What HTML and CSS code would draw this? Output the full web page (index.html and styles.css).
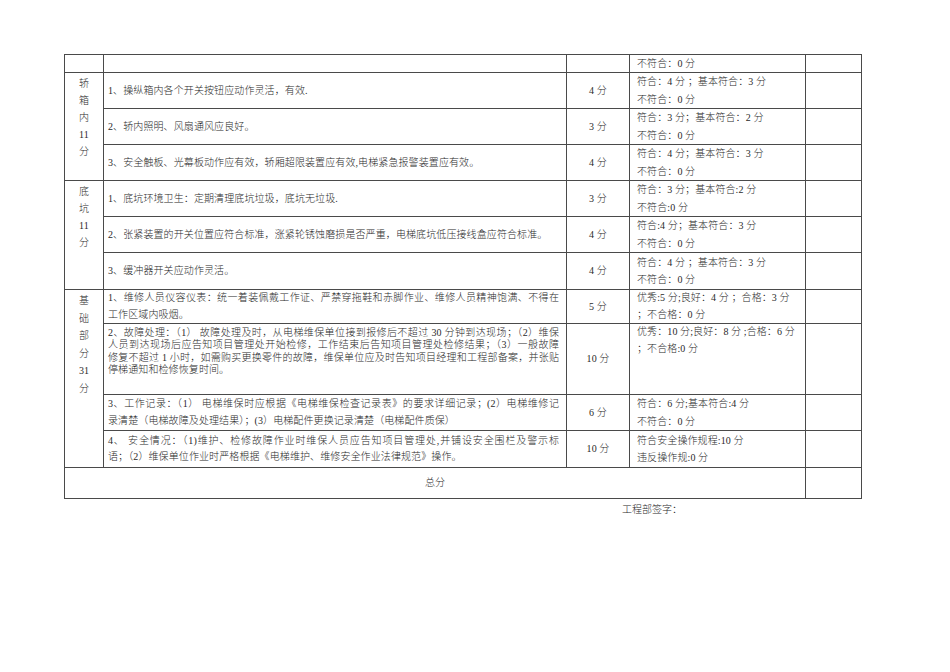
FILE: index.html
```html
<!DOCTYPE html>
<html lang="zh-CN">
<head>
<meta charset="utf-8">
<title>电梯维保检查表</title>
<link rel="stylesheet" href="styles.css">
</head>
<body>
<div class="page">
<table class="sheet">
  <colgroup>
    <col class="c1"><col class="c2"><col class="c3"><col class="c4"><col class="c5">
  </colgroup>
  <tr class="h18">
    <td></td><td></td><td></td>
    <td class="rule one">不符合：0 分</td>
    <td></td>
  </tr>
  <tr class="h36">
    <td class="cat" rowspan="3"><div>轿</div><div>箱</div><div>内</div><div>11</div><div>分</div></td>
    <td class="item">1、操纵箱内各个开关按钮应动作灵活，有效.</td>
    <td class="pts">4 分</td>
    <td class="rule">符合：4 分 ；基本符合：3 分<br>不符合：0 分</td>
    <td></td>
  </tr>
  <tr class="h36">
    <td class="item">2、轿内照明、风扇通风应良好。</td>
    <td class="pts">3 分</td>
    <td class="rule">符合：3 分；基本符合：2 分<br>不符合：0 分</td>
    <td></td>
  </tr>
  <tr class="h35">
    <td class="item">3、安全触板、光幕板动作应有效，轿厢超限装置应有效,电梯紧急报警装置应有效。</td>
    <td class="pts">4 分</td>
    <td class="rule">符合：4 分；基本符合：3 分<br>不符合：0 分</td>
    <td></td>
  </tr>
  <tr class="h36">
    <td class="cat" rowspan="3"><div>底</div><div>坑</div><div>11</div><div>分</div></td>
    <td class="item">1、底坑环境卫生：定期清理底坑垃圾，底坑无垃圾.</td>
    <td class="pts">3 分</td>
    <td class="rule">符合：3 分；基本符合:2 分<br>不符合:0 分</td>
    <td></td>
  </tr>
  <tr class="h36">
    <td class="item">2、张紧装置的开关位置应符合标准，涨紧轮锈蚀磨损是否严重，电梯底坑低压接线盒应符合标准。</td>
    <td class="pts">4 分</td>
    <td class="rule">符合:4 分；基本符合：3 分<br>不符合：0 分</td>
    <td></td>
  </tr>
  <tr class="h37">
    <td class="item">3、缓冲器开关应动作灵活。</td>
    <td class="pts">4 分</td>
    <td class="rule">符合：4 分 ；基本符合：3 分<br>不符合：0 分</td>
    <td></td>
  </tr>
  <tr class="h34">
    <td class="cat cat-tall" rowspan="4"><div>基</div><div>础</div><div>部</div><div>分</div><div>31</div><div>分</div></td>
    <td class="item multi">
      <div class="jl">1、维修人员仪容仪表：统一着装佩戴工作证、严禁穿拖鞋和赤脚作业、维修人员精神饱满、不得在</div>
      <div>工作区域内吸烟。</div>
    </td>
    <td class="pts">5 分</td>
    <td class="rule top">优秀:5 分;良好：4 分 ；合格：3 分<br>；不合格：0 分</td>
    <td></td>
  </tr>
  <tr class="h71">
    <td class="item multi tight">
      <div class="jl">2、故障处理：（1） 故障处理及时，从电梯维保单位接到报修后不超过 30 分钟到达现场；（2）维保</div>
      <div class="jl">人员到达现场后应告知项目管理处开始检修，工作结束后告知项目管理处检修结果；（3）一般故障</div>
      <div class="jl">修复不超过 1 小时，如需购买更换零件的故障，维保单位应及时告知项目经理和工程部备案，并张贴</div>
      <div>停梯通知和检修恢复时间。</div>
    </td>
    <td class="pts">10 分</td>
    <td class="rule top">优秀：10 分;良好：8 分 ;合格：6 分<br>；不合格:0 分</td>
    <td></td>
  </tr>
  <tr class="h36">
    <td class="item multi">
      <div class="jl">3、工作记录：（1） 电梯维保时应根据《电梯维保检查记录表》的要求详细记录；(2）电梯维修记</div>
      <div>录清楚（电梯故障及处理结果）；(3）电梯配件更换记录清楚（电梯配件质保）</div>
    </td>
    <td class="pts">6 分</td>
    <td class="rule">符合：6 分;基本符合:4 分<br>不符合：0 分</td>
    <td></td>
  </tr>
  <tr class="h37">
    <td class="item multi">
      <div class="jl">4、 安全情况：（1)维护、检修故障作业时维保人员应告知项目管理处,并铺设安全围栏及警示标</div>
      <div>语；（2）维保单位作业时严格根据《电梯维护、维修安全作业法律规范》操作。</div>
    </td>
    <td class="pts">10 分</td>
    <td class="rule">符合安全操作规程:10 分<br>违反操作规:0 分</td>
    <td></td>
  </tr>
  <tr class="h31">
    <td class="total" colspan="4">总分</td>
    <td></td>
  </tr>
</table>
<div class="sign">工程部签字：</div>
</div>
</body>
</html>
```
FILE: styles.css
```css
html, body {
  margin: 0;
  padding: 0;
  background: #ffffff;
}
.page {
  padding: 54px 0 0 64px;
  font-family: "Liberation Serif", "Noto Sans CJK SC", serif;
  font-size: 10px;
  font-weight: 300;
  color: #2a2a2a;
}
.sheet {
  border-collapse: collapse;
  table-layout: fixed;
  width: 797px;
}
.c1 { width: 39px; }
.c2 { width: 463px; }
.c3 { width: 63px; }
.c4 { width: 176px; }
.c5 { width: 56px; }
.sheet td {
  border: 1px solid #4a4a4a;
  padding: 0;
  vertical-align: middle;
  line-height: 16px;
  letter-spacing: 0.1px;
  white-space: nowrap;
  overflow: hidden;
}
.h18 { height: 18px; }
.h31 { height: 31px; }
.h34 { height: 34px; }
.h35 { height: 35px; }
.h36 { height: 36px; }
.h37 { height: 37px; }
.h71 { height: 71px; }
.sheet td.cat {
  vertical-align: top;
  text-align: center;
  padding-top: 2px;
  line-height: 17px;
}
.sheet td.cat-tall {
  line-height: 17.6px;
}
.sheet td.item {
  padding: 0 7px 0 4px;
}
.sheet td.multi {
  line-height: 16.5px;
}
.sheet td.tight {
  vertical-align: top;
  padding-top: 3px;
  line-height: 12.3px;
}
.jl {
  text-align: justify;
  text-align-last: justify;
}
.sheet td.pts {
  text-align: center;
}
.sheet td.rule {
  padding-left: 7px;
  line-height: 17.5px;
}
.sheet td.rule.top {
  vertical-align: top;
  line-height: 16.5px;
}
.sheet td.rule.one {
  line-height: 16px;
}
.sheet td.total {
  text-align: center;
}
.sign {
  padding: 3px 0 0 558px;
  line-height: 16px;
}
```
